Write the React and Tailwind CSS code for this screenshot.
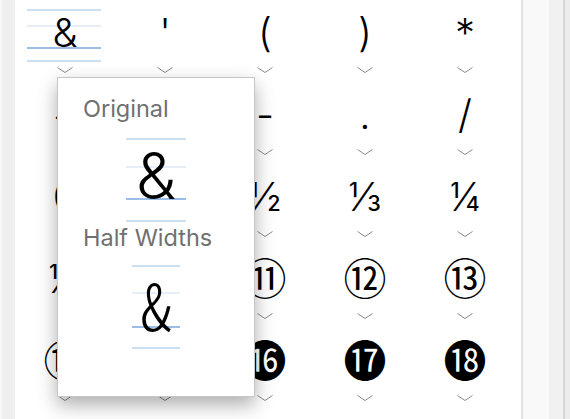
import React from 'react';

const ROWS = [
  ['&', "'", '(', ')', '*'],
  ['+', ',', '-', '.', '/'],
  ['0', '1', '½', '⅓', '¼'],
  ['⅕', '⑩', '⑪', '⑫', '⑬'],
  ['⑭', '⑮', '⓰', '⓱', '⓲'],
];

const glyphFont = "font-['Inter','Noto_Sans_CJK_JP','DejaVu_Sans',sans-serif]";

function Chevron() {
  return (
    <svg width="18" height="8" viewBox="0 0 18 8" fill="none">
      <path d="M1.5 1.5 L9 6.5 L16.5 1.5" stroke="#8a8a8a" strokeWidth="1" />
    </svg>
  );
}

// guide lines shown behind the selected / previewed glyph
function GuideLines({ lines, className }) {
  return (
    <>
      {lines.map(([top, color], i) => (
        <div
          key={i}
          className={`absolute h-[2px] ${className}`}
          style={{ top, backgroundColor: color }}
        />
      ))}
    </>
  );
}

function Cell({ ch, selected }) {
  const circled = /[\u2460-\u24ff]/.test(ch);
  return (
    <div className="relative flex h-[82px] flex-col items-center">
      {selected && (
        <GuideLines
          className="left-[12px] w-[74px]"
          lines={[
            [9, '#cddff3'],
            [25, '#e6eef8'],
            [47, '#9bbde8'],
            [60, '#cddff3'],
          ]}
        />
      )}
      <div
        className={`relative flex h-[66px] items-center justify-center leading-none text-black ${glyphFont} ${
          circled ? 'text-[43px] font-normal' : 'text-[40px] font-light'
        }`}
      >
        {ch}
      </div>
      <div className="flex h-[16px] items-start">
        <Chevron />
      </div>
    </div>
  );
}

function Preview({ children, width, lines, half }) {
  return (
    <div className="relative h-[85px] self-center" style={{ width }}>
      <GuideLines className="left-0 right-0" lines={lines} />
      <div
        className={`relative flex justify-center pt-[6px] text-[64px] leading-none text-black ${
          half
            ? "font-['Noto_Sans_CJK_JP',sans-serif] font-light [font-feature-settings:'hwid']"
            : "font-['Inter',sans-serif] font-light"
        }`}
      >
        {children}
      </div>
    </div>
  );
}

export default function App() {
  return (
    <div className="flex h-[419px] w-[570px] overflow-hidden bg-white">
      {/* left gutter */}
      <div className="w-[15px] shrink-0 border-l-2 border-[#f7f7f7] bg-[#efefef]" />

      {/* glyph grid */}
      <div className="relative w-[506px] shrink-0 bg-white">
        <div className="grid grid-cols-[repeat(5,100px)]">
          {ROWS.flat().map((ch, i) => (
            <Cell key={i} ch={ch} selected={i === 0} />
          ))}
        </div>

        {/* font variation popover */}
        <div className="absolute left-[42px] top-[77px] flex h-[320px] w-[198px] flex-col border border-[#c6c6c6] bg-white pt-[19px] shadow-[0_8px_18px_rgba(0,0,0,0.32)]">
          <div className="pl-[25px] font-['Inter',sans-serif] text-[23.5px] leading-none text-[#707070]">
            Original
          </div>
          <div className="mt-[17px] flex flex-col">
            <Preview
              width={60}
              lines={[
                [0, '#cddff3'],
                [28, '#e6eef8'],
                [60, '#9bbde8'],
                [82, '#cddff3'],
              ]}
            >
              &amp;
            </Preview>
          </div>
          <div className="mt-[3px] pl-[25px] font-['Inter',sans-serif] text-[23.5px] leading-none text-[#707070]">
            Half Widths
          </div>
          <div className="mt-[16px] flex flex-col">
            <Preview
              width={48}
              half
              lines={[
                [0, '#cddff3'],
                [27, '#e6eef8'],
                [61, '#9bbde8'],
                [82, '#cddff3'],
              ]}
            >
              &amp;
            </Preview>
          </div>
        </div>
      </div>

      {/* scroller */}
      <div className="w-[2px] shrink-0 bg-[#e3e3e3]" />
      <div className="w-[26px] shrink-0 bg-[#f9f9f9]" />
      <div className="w-[14px] shrink-0 bg-[#f1f1f1]" />
      <div className="w-[2px] shrink-0 bg-[#d6d6d6]" />
      <div className="flex-1 bg-[#ececec]" />
    </div>
  );
}
